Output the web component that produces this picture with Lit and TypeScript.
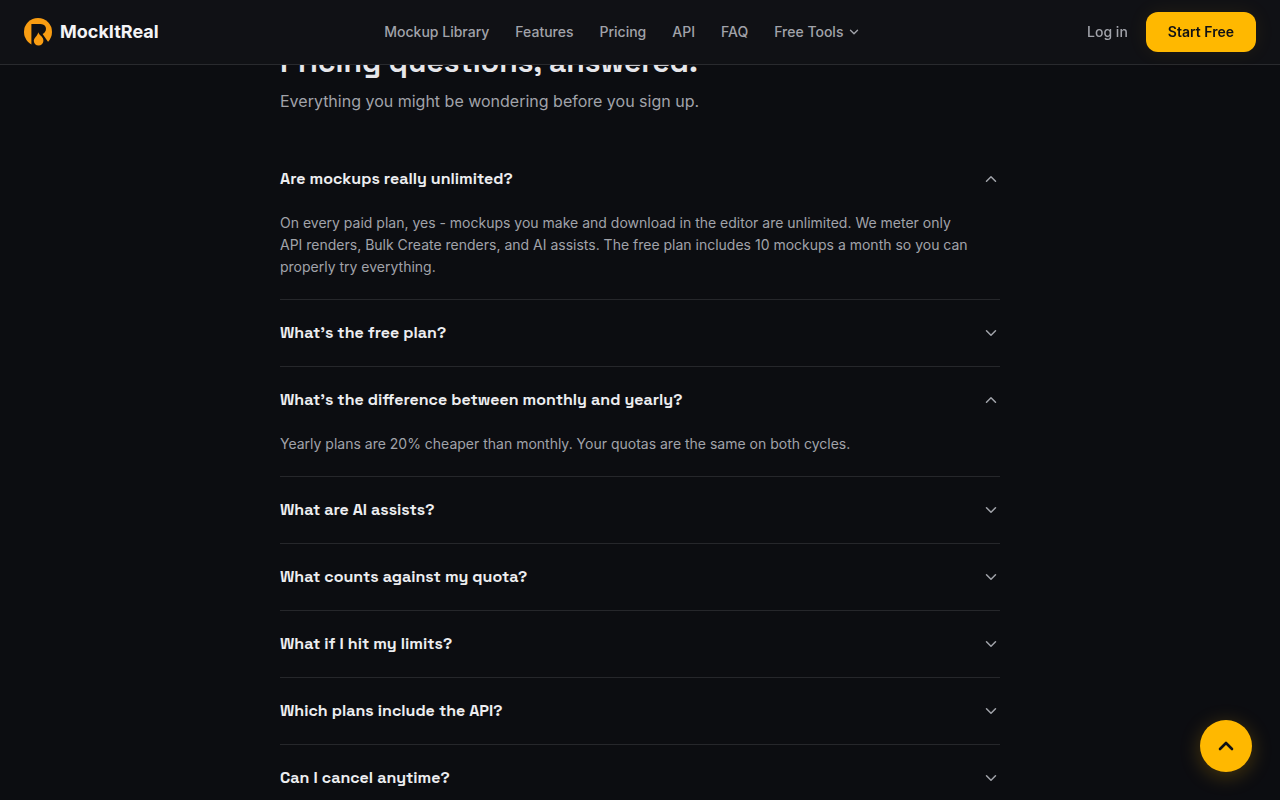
import { LitElement, html, css, svg, nothing } from "lit";
import { customElement, property, state } from "lit/decorators.js";
import { classMap } from "lit/directives/class-map.js";

interface Faq {
  question: string;
  answer: string;
  open?: boolean;
}

const LINKS = ["Mockup Library", "Features", "Pricing", "API", "FAQ"];

const FAQS: Faq[] = [
  {
    question: "Are mockups really unlimited?",
    answer:
      "On every paid plan, yes - mockups you make and download in the editor are unlimited. We meter only API renders, Bulk Create renders, and AI assists. The free plan includes 10 mockups a month so you can properly try everything.",
    open: true,
  },
  { question: "What’s the free plan?", answer: "" },
  {
    question: "What’s the difference between monthly and yearly?",
    answer:
      "Yearly plans are 20% cheaper than monthly. Your quotas are the same on both cycles.",
    open: true,
  },
  { question: "What are AI assists?", answer: "" },
  { question: "What counts against my quota?", answer: "" },
  { question: "What if I hit my limits?", answer: "" },
  { question: "Which plans include the API?", answer: "" },
  { question: "Can I cancel anytime?", answer: "" },
];

const chevronDown = svg`<path d="m6 9 6 6 6-6" />`;
const chevronUp = svg`<path d="m18 15-6-6-6 6" />`;

@customElement("site-header")
export class SiteHeader extends LitElement {
  static styles = css`
    :host {
      display: block;
    }
    .bar {
      display: flex;
      align-items: center;
      justify-content: space-between;
      height: 64px;
      padding: 0 24px;
      background: #101115;
      border-bottom: 1px solid #292a2e;
    }
    .brand {
      display: flex;
      align-items: center;
      gap: 8px;
      color: #f4f4f6;
      font-size: 18px;
      font-weight: 700;
      line-height: 28px;
      text-decoration: none;
    }
    .logo {
      width: 28px;
      height: 28px;
    }
    .links {
      display: flex;
      align-items: center;
      gap: 26px;
    }
    .link {
      display: flex;
      align-items: center;
      gap: 4px;
      padding: 0;
      border: 0;
      background: none;
      color: #a1a3aa;
      font: 500 14px/20px Inter, sans-serif;
      text-decoration: none;
      cursor: pointer;
    }
    .caret {
      width: 14px;
      height: 14px;
      fill: none;
      stroke: currentColor;
      stroke-width: 2.4;
      stroke-linecap: round;
      stroke-linejoin: round;
    }
    .actions {
      display: flex;
      align-items: center;
      gap: 18px;
    }
    .start {
      padding: 10px 22px;
      border: 0;
      border-radius: 12px;
      background: #ffb800;
      box-shadow: 0 0 20px rgba(255, 184, 0, 0.08);
      color: #101115;
      font: 600 14px/20px Inter, sans-serif;
      cursor: pointer;
    }
  `;

  render() {
    return html`
      <header class="bar">
        <a class="brand" href="#home">
          <svg class="logo" viewBox="0 0 28 28" aria-hidden="true">
            <circle cx="14" cy="14" r="14" fill="#f99d12" />
            <path
              fill="#101115"
              d="M7.4 29V6h8.800c2.600 0 4.500 1 5.300 2.700.8 1.800.6 4-.7 5.600-.6.8-1.300 1.300-2.200 1.700l5.900 8.500-3.500 4.500Z"
            />
            <path
              fill="#f99d12"
              d="M14.300 14.200c.3 1.500 1.600 2.500 2.900 3.900 1.400 1.500 2.300 3 2.200 4.800-.1 2.700-2.300 4.600-4.800 4.600-2.700 0-4.700-1.900-4.800-4.500 0-1.600.7-2.700 1.800-4 1.300-1.500 2.300-2.900 2.700-4.800Z"
            />
          </svg>
          <span>MockItReal</span>
        </a>
        <nav class="links" aria-label="Main">
          ${LINKS.map((name) => html`<a class="link" href="#">${name}</a>`)}
          <button class="link" type="button" aria-haspopup="menu">
            Free Tools
            <svg class="caret" viewBox="0 0 24 24" aria-hidden="true">
              ${chevronDown}
            </svg>
          </button>
        </nav>
        <div class="actions">
          <a class="link" href="#login">Log in</a>
          <button class="start" type="button">Start Free</button>
        </div>
      </header>
    `;
  }
}

@customElement("faq-item")
export class FaqItem extends LitElement {
  @property({ attribute: false }) faq!: Faq;
  @state() private toggled = false;

  static styles = css`
    :host {
      display: block;
      border-bottom: 1px solid #26272b;
    }
    .heading {
      margin: 0;
    }
    .question {
      display: flex;
      align-items: center;
      justify-content: space-between;
      gap: 16px;
      width: 100%;
      padding: 20px 0;
      border: 0;
      background: none;
      color: #ededf0;
      font: 600 16px/26px "Space Grotesk", Inter, sans-serif;
      text-align: left;
      cursor: pointer;
    }
    .chevron {
      flex: none;
      width: 18px;
      height: 18px;
      fill: none;
      stroke: #a1a3aa;
      stroke-width: 2;
      stroke-linecap: round;
      stroke-linejoin: round;
    }
    .answer {
      margin: 0;
      padding: 0 32px 21px 0;
      color: #a1a3aa;
      font-size: 14px;
      line-height: 22px;
    }
  `;

  render() {
    const open = Boolean(this.faq.open) !== this.toggled;
    return html`
      <h3 class="heading">
        <button
          class=${classMap({ question: true, open })}
          type="button"
          aria-expanded=${open ? "true" : "false"}
          @click=${() => (this.toggled = !this.toggled)}
        >
          <span>${this.faq.question}</span>
          <svg class="chevron" viewBox="0 0 24 24" aria-hidden="true">
            ${open ? chevronUp : chevronDown}
          </svg>
        </button>
      </h3>
      ${open && this.faq.answer
        ? html`<p class="answer">${this.faq.answer}</p>`
        : nothing}
    `;
  }
}

@customElement("app-root")
export class AppRoot extends LitElement {
  static styles = css`
    :host {
      display: block;
      height: 100vh;
      overflow: hidden;
      background: #0c0d11;
      color: #e6e6ea;
      font-family: Inter, sans-serif;
    }
    .top {
      position: fixed;
      inset: 0 0 auto;
      z-index: 2;
    }
    .faq {
      box-sizing: border-box;
      max-width: 768px;
      margin: 0 auto;
      padding: 42px 24px 0;
    }
    .title {
      margin: 0;
      font: 700 30px/40px "Space Grotesk", Inter, sans-serif;
    }
    .lead {
      margin: 6px 0 32px;
      color: #a1a3aa;
      font-size: 16px;
      line-height: 26px;
    }
    .to-top {
      position: fixed;
      right: 28px;
      bottom: 28px;
      z-index: 2;
      display: grid;
      place-items: center;
      width: 52px;
      height: 52px;
      padding: 0;
      border: 0;
      border-radius: 50%;
      background: #ffb800;
      box-shadow: 0 4px 20px rgba(255, 184, 0, 0.25);
      cursor: pointer;
    }
    .arrow {
      width: 24px;
      height: 24px;
      fill: none;
      stroke: #101115;
      stroke-width: 2.6;
      stroke-linecap: round;
      stroke-linejoin: round;
    }
  `;

  render() {
    return html`
      <site-header class="top"></site-header>
      <main class="faq">
        <h2 class="title">Pricing questions, answered.</h2>
        <p class="lead">Everything you might be wondering before you sign up.</p>
        ${FAQS.map((faq) => html`<faq-item .faq=${faq}></faq-item>`)}
      </main>
      <button class="to-top" type="button" aria-label="Back to top">
        <svg class="arrow" viewBox="0 0 24 24" aria-hidden="true">
          ${chevronUp}
        </svg>
      </button>
    `;
  }
}
